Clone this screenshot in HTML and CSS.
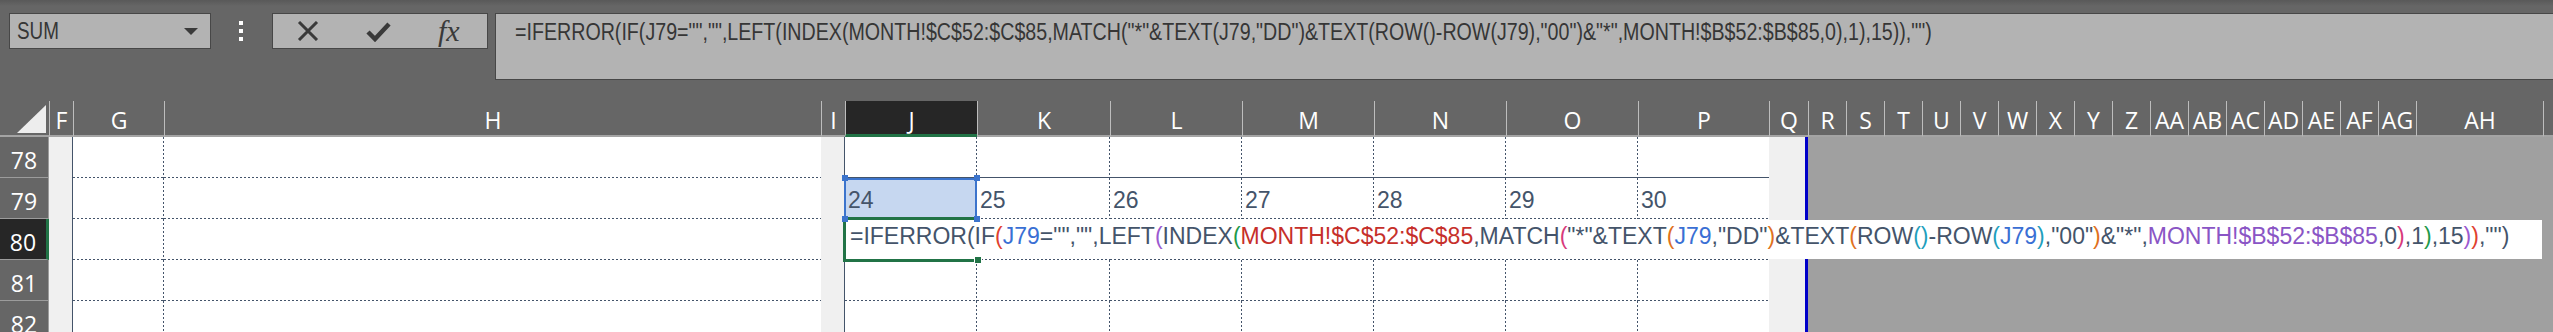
FILE: index.html
```html
<!DOCTYPE html>
<html lang="en">
<head>
    <meta charset="UTF-8">
    <meta name="viewport" content="width=device-width, initial-scale=1.0">
    <title>Page Break Preview - editing J80</title>
    <link rel="stylesheet" href="styles.css">
</head>
<body>
    <!-- Name box, formula buttons and formula bar -->
    <div class="toolbar">
        <div class="name-box">
            <span class="squeeze">SUM</span>
            <span class="caret"></span>
        </div>
        <div class="grip"><i></i><i></i><i></i></div>
        <div class="fx-buttons">
            <span class="fx-btn">
                <svg width="22" height="20" viewBox="0 0 22 20"><path d="M2 1 L20 19 M20 1 L2 19" stroke="#3a3a3a" stroke-width="3"/></svg>
            </span>
            <span class="fx-btn">
                <svg width="25" height="21" viewBox="0 0 25 21"><path d="M2 11 L9 18 L23 3" fill="none" stroke="#3a3a3a" stroke-width="4.5"/></svg>
            </span>
            <span class="fx-btn fx">fx</span>
        </div>
        <div class="formula-bar">
            <span class="squeeze">=IFERROR(IF(J79="","",LEFT(INDEX(MONTH!$C$52:$C$85,MATCH("*"&amp;TEXT(J79,"DD")&amp;TEXT(ROW()-ROW(J79),"00")&amp;"*",MONTH!$B$52:$B$85,0),1),15)),"")</span>
        </div>
    </div>

    <!-- Worksheet grid -->
    <div class="sheet">
        <div class="corner">
            <svg width="49" height="34" viewBox="0 0 49 34"><polygon points="17,32 46,32 46,4" fill="#ededed"/></svg>
        </div>
        <div class="col-head">F</div>
        <div class="col-head">G</div>
        <div class="col-head">H</div>
        <div class="col-head">I</div>
        <div class="col-head active">J</div>
        <div class="col-head">K</div>
        <div class="col-head">L</div>
        <div class="col-head">M</div>
        <div class="col-head">N</div>
        <div class="col-head">O</div>
        <div class="col-head">P</div>
        <div class="col-head">Q</div>
        <div class="col-head">R</div>
        <div class="col-head">S</div>
        <div class="col-head">T</div>
        <div class="col-head">U</div>
        <div class="col-head">V</div>
        <div class="col-head">W</div>
        <div class="col-head">X</div>
        <div class="col-head">Y</div>
        <div class="col-head">Z</div>
        <div class="col-head">AA</div>
        <div class="col-head">AB</div>
        <div class="col-head">AC</div>
        <div class="col-head">AD</div>
        <div class="col-head">AE</div>
        <div class="col-head">AF</div>
        <div class="col-head">AG</div>
        <div class="col-head">AH</div>
        <div class="col-head"></div>

        <!-- narrow grey columns and the area outside the print range -->
        <div class="band band-f"></div>
        <div class="band band-i"></div>
        <div class="band band-q"></div>
        <div class="outside"></div>

        <!-- row 78 -->
        <div class="row-head">78</div>
        <div class="cell"></div>
        <div class="cell col-h"></div>
        <div class="cell edge"></div>
        <div class="cell edge"></div>
        <div class="cell edge"></div>
        <div class="cell edge"></div>
        <div class="cell edge"></div>
        <div class="cell edge"></div>
        <div class="cell edge last"></div>

        <!-- row 79 -->
        <div class="row-head">79</div>
        <div class="cell"></div>
        <div class="cell col-h"></div>
        <div class="cell selected">24<span class="handle tl"></span><span class="handle tr"></span><span class="handle bl"></span><span class="handle br"></span></div>
        <div class="cell">25</div>
        <div class="cell">26</div>
        <div class="cell">27</div>
        <div class="cell">28</div>
        <div class="cell">29</div>
        <div class="cell last">30</div>

        <!-- row 80, being edited -->
        <div class="row-head active">80</div>
        <div class="cell"></div>
        <div class="cell col-h"></div>
        <div class="cell open active">
            <div class="editor">=IFERROR(IF<span class="p-a">(</span><span class="ref-blue">J79</span>="","",LEFT<span class="p-b">(</span>INDEX<span class="p-c">(</span><span class="ref-red">MONTH!$C$52:$C$85</span>,MATCH<span class="p-d">(</span>"*"&amp;TEXT<span class="p-e">(</span><span class="ref-blue">J79</span>,"DD"<span class="p-e">)</span>&amp;TEXT<span class="p-e">(</span>ROW<span class="p-f">()</span>-ROW<span class="p-f">(</span><span class="ref-blue">J79</span><span class="p-f">)</span>,"00"<span class="p-e">)</span>&amp;"*",<span class="ref-purple">MONTH!$B$52:$B$85</span>,0<span class="p-d">)</span>,1<span class="p-c">)</span>,15<span class="p-b">)</span><span class="p-a">)</span>,"")</div>
        </div>
        <div class="cell open"></div>
        <div class="cell open"></div>
        <div class="cell open"></div>
        <div class="cell open"></div>
        <div class="cell open"></div>
        <div class="cell open"></div>

        <!-- row 81 -->
        <div class="row-head">81</div>
        <div class="cell"></div>
        <div class="cell col-h"></div>
        <div class="cell"></div>
        <div class="cell"></div>
        <div class="cell"></div>
        <div class="cell"></div>
        <div class="cell"></div>
        <div class="cell"></div>
        <div class="cell last"></div>

        <!-- row 82 -->
        <div class="row-head">82</div>
        <div class="cell"></div>
        <div class="cell col-h"></div>
        <div class="cell"></div>
        <div class="cell"></div>
        <div class="cell"></div>
        <div class="cell"></div>
        <div class="cell"></div>
        <div class="cell"></div>
        <div class="cell last"></div>
    </div>
</body>
</html>
```

FILE: styles.css
```css
body {
    margin: 0;
    background: #666;
    font-family: "Liberation Sans", Arial, sans-serif;
    overflow: hidden;
}

/* ---------- toolbar ---------- */

.toolbar {
    display: flex;
    align-items: flex-start;
    height: 101px;
    box-sizing: border-box;
    padding-top: 13px;
    background: linear-gradient(#595959, #666 6px);
    color: #363636;
}

.squeeze {
    display: inline-block;
    font-size: 23px;
    white-space: nowrap;
    transform-origin: left center;
}

.name-box {
    display: flex;
    align-items: center;
    justify-content: space-between;
    width: 202px;
    height: 36px;
    margin-left: 9px;
    padding: 0 12px 0 7px;
    box-sizing: border-box;
    border: 1px solid #474747;
    background: #b3b3b3;
}

.name-box .squeeze {
    transform: scaleX(0.82);
}

.caret {
    border-left: 7px solid transparent;
    border-right: 7px solid transparent;
    border-top: 7px solid #3a3a3a;
}

.grip {
    display: flex;
    flex-direction: column;
    gap: 4px;
    margin: 8px 0 0 28px;
}

.grip i {
    width: 4px;
    height: 4px;
    background: #fff;
}

.fx-buttons {
    display: flex;
    width: 216px;
    height: 36px;
    margin-left: 29px;
    box-sizing: border-box;
    border: 1px solid #474747;
    background: #b3b3b3;
}

.fx-btn {
    flex: 1;
    display: flex;
    align-items: center;
    justify-content: center;
}

.fx {
    font-family: "Liberation Serif", "Times New Roman", serif;
    font-style: italic;
    font-size: 30px;
    color: #3a3a3a;
    padding-right: 3px;
}

.formula-bar {
    flex: 1;
    height: 67px;
    margin-left: 7px;
    padding-left: 19px;
    box-sizing: border-box;
    border: 1px solid #474747;
    border-right: none;
    background: #b3b3b3;
    line-height: 36px;
    overflow: hidden;
}

.formula-bar .squeeze {
    transform: scaleX(0.854);
}

/* ---------- sheet ---------- */

.sheet {
    display: grid;
    grid-template-columns: 49px 24px 91px 657px 24px 132px 133px 132px 132px 132px 132px 131px 39px repeat(16, 38px) 127px 1fr;
    grid-template-rows: 36px repeat(5, 41px);
}

.corner,
.col-head {
    box-sizing: border-box;
    border-bottom: 2px solid #a4a4a4;
    background: #666;
}

.col-head,
.row-head {
    display: flex;
    align-items: center;
    justify-content: center;
    font-family: "Open Sans", sans-serif;
    font-size: 23px;
    color: #fff;
    white-space: nowrap;
    overflow: hidden;
}

.col-head {
    border-left: 1px solid #bdbdbd;
    padding-top: 4px;
}

.col-head.active {
    background: #262626;
    border-bottom: 3px solid #217346;
}

.row-head {
    box-sizing: border-box;
    padding-top: 5px;
    border-bottom: 1px solid #9c9c9c;
    border-right: 1px solid #9c9c9c;
    background: #666;
}

.row-head.active {
    background: #262626;
    border-right: 3px solid #217346;
}

.band {
    grid-row: 2 / -1;
    background: #f0f0f0;
}

.band-f {
    grid-column: 2;
    border-right: 1px solid #44546a;
}

.band-i {
    grid-column: 5;
    border-right: 1px solid #44546a;
}

.band-q {
    grid-column: 13;
    border-right: 3px solid #0000c8;
}

.outside {
    grid-column: 14 / -1;
    grid-row: 2 / -1;
    background: #a0a0a0;
}

/* cells with Excel's dotted print-preview gridlines */
.cell {
    --bottom: linear-gradient(to right, #44546a 2px, transparent 2px) left bottom / 4px 1px repeat-x;
    --right: linear-gradient(#44546a 2px, transparent 2px) right top / 1px 4px repeat-y;
    background: var(--bottom), var(--right), #fff;
    padding-left: 3px;
    font-size: 23px;
    line-height: 45px;
    color: #44546a;
    white-space: nowrap;
}

.col-h,
.last,
.open {
    --right: none;
}

.edge {
    --bottom: linear-gradient(#44546a, #44546a) left bottom / 100% 1px no-repeat;
}

.selected {
    position: relative;
    background: #c6d7f0;
}

.selected::before {
    content: '';
    position: absolute;
    inset: 0 0 0 -1px;
    border: 2px solid #3c74cc;
}

.handle {
    position: absolute;
    z-index: 3;
    width: 6px;
    height: 6px;
    background: #3c74cc;
}

.handle.tl { left: -3px; top: -3px; }
.handle.tr { right: -3px; top: -3px; }
.handle.bl { left: -3px; bottom: -3px; }
.handle.br { right: -3px; bottom: -3px; }

.active {
    position: relative;
}

.cell.active::before {
    content: '';
    position: absolute;
    z-index: 1;
    left: -2px;
    top: -2px;
    width: 134px;
    height: 45px;
    box-sizing: border-box;
    border: 3px solid #217346;
}

.cell.active::after {
    content: '';
    position: absolute;
    z-index: 3;
    left: 129px;
    top: 37px;
    width: 6px;
    height: 6px;
    background: #217346;
    border: 1px solid #fff;
}

/* in-cell editor spilling over the neighbouring cells */
.editor {
    position: absolute;
    z-index: 2;
    left: 1px;
    top: 1px;
    width: 1696px;
    height: 39px;
    box-sizing: border-box;
    padding-left: 4px;
    background: #fff;
    line-height: 32px;
    color: #44546a;
}

.p-a { color: #e0402f; }
.p-b { color: #9b59d0; }
.p-c { color: #1e9a4a; }
.p-d { color: #d83a7c; }
.p-e { color: #e07020; }
.p-f { color: #1f9fbd; }

.ref-blue { color: #3a6fd4; }
.ref-red { color: #c62f2a; }
.ref-purple { color: #8a55c5; }
```
